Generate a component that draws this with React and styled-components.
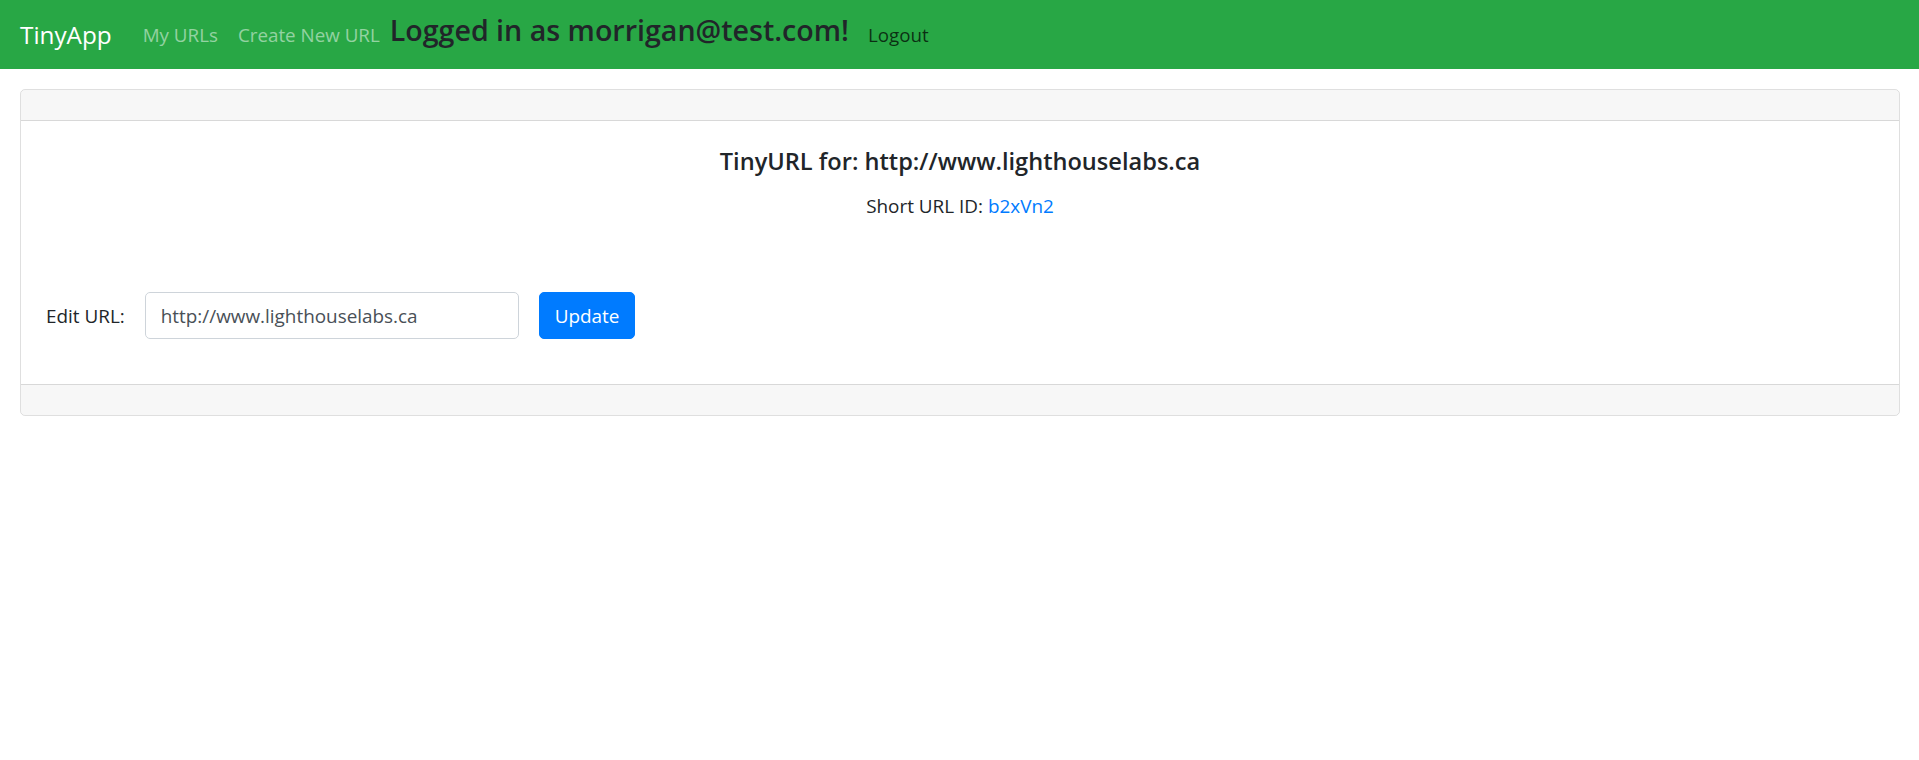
import React from "react";
import styled, { createGlobalStyle } from "styled-components";

const GlobalStyle = createGlobalStyle`
  body {
    margin: 0;
    font-family: "Open Sans", "Noto Sans", sans-serif;
    font-size: 18.9px;
    line-height: 30px;
    color: #212529;
    background: #fff;
  }
`;

function App() {
  const longURL = "http://www.lighthouselabs.ca";
  const shortURL = "b2xVn2";

  return (
    <>
      <GlobalStyle />
      <Navbar>
        <Brand href="#">TinyApp</Brand>
        <NavLink href="#">My URLs</NavLink>
        <NavLink href="#">Create New URL</NavLink>
        <Greeting>Logged in as morrigan@test.com!</Greeting>
        <NavLink href="#" $dark>
          Logout
        </NavLink>
      </Navbar>

      <Page>
        <Card>
          <CardHeader />
          <CardBody>
            <Title>TinyURL for: {longURL}</Title>
            <ShortId>
              Short URL ID: <IdLink href="#">{shortURL}</IdLink>
            </ShortId>
            {/* edit form */}
            <EditForm onSubmit={(e) => e.preventDefault()}>
              <Label htmlFor="longURL">Edit URL:</Label>
              <Input id="longURL" defaultValue={longURL} />
              <Button type="submit">Update</Button>
            </EditForm>
          </CardBody>
          <CardFooter />
        </Card>
      </Page>
    </>
  );
}

export default App;

const Navbar = styled.nav`
  height: 69px;
  box-sizing: border-box;
  padding: 0 20px;
  background: #28a745;
  display: flex;
  align-items: center;
`;

const Brand = styled.a`
  font-size: 24.3px;
  line-height: 37px;
  color: #fff;
  text-decoration: none;
  margin-right: 21px;
  white-space: nowrap;
`;

const NavLink = styled.a`
  font-size: 18.8px;
  line-height: 30px;
  padding: 10px;
  text-decoration: none;
  white-space: nowrap;
  color: ${(props) => (props.$dark ? "rgba(0, 0, 0, 0.72)" : "rgba(255, 255, 255, 0.5)")};
`;

const Greeting = styled.h4`
  margin: 0 9px 10px 0;
  font-size: 28.6px;
  font-weight: 600;
  line-height: 36px;
  color: #212529;
  white-space: nowrap;
`;

const Page = styled.main`
  padding: 20px 19px 0 20px;
`;

const Card = styled.div`
  border: 1px solid rgba(0, 0, 0, 0.125);
  border-radius: 5px;
  overflow: hidden;
`;

const CardHeader = styled.div`
  height: 30px;
  background: rgba(0, 0, 0, 0.03);
  border-bottom: 1px solid rgba(0, 0, 0, 0.125);
`;

const CardFooter = styled.div`
  height: 30px;
  background: rgba(0, 0, 0, 0.03);
  border-top: 1px solid rgba(0, 0, 0, 0.125);
`;

const CardBody = styled.div`
  padding: 25px;
  text-align: center;
`;

const Title = styled.h5`
  margin: 0 0 15px;
  font-size: 23.6px;
  font-weight: 600;
  line-height: 30px;
`;

const ShortId = styled.p`
  margin: 0 0 71px;
`;

const IdLink = styled.a`
  color: #007bff;
  text-decoration: none;
`;

const EditForm = styled.form`
  display: flex;
  align-items: center;
  gap: 20px;
  margin-bottom: 20px;
  text-align: left;
`;

const Label = styled.label`
  white-space: nowrap;
`;

const Input = styled.input`
  width: 374px;
  height: 47px;
  box-sizing: border-box;
  padding: 7px 15px;
  font-family: inherit;
  font-size: 18.9px;
  color: #495057;
  border: 1px solid #ced4da;
  border-radius: 5px;
  outline: none;
`;

const Button = styled.button`
  height: 47px;
  padding: 0 15px;
  font-family: inherit;
  font-size: 18.9px;
  color: #fff;
  background: #007bff;
  border: 1px solid #007bff;
  border-radius: 5px;
  cursor: pointer;
`;
